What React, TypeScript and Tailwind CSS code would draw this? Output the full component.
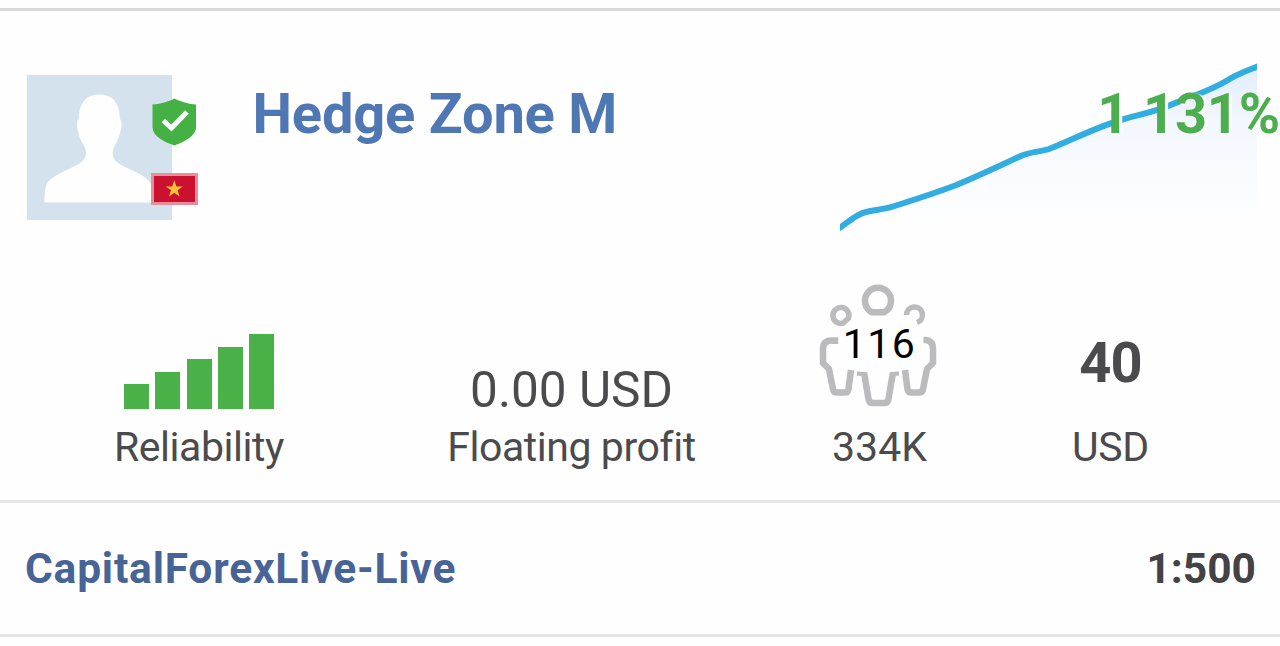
import type { ReactNode } from "react";

const BARS = ["h-[25px]", "h-[37px]", "h-[50px]", "h-[62px]", "h-[75px]"];

const Avatar = () => (
  <div className="relative mt-[64px] ml-[27px] h-[145px] w-[145px] shrink-0">
    <svg className="h-[145px] w-[145px]" viewBox="0 0 145 145">
      <rect width="145" height="145" fill="#d3e2ec" />
      <path
        d="M72 19.500C59 19.500 52 28 51.700 44C49.500 46 49.500 50 50.500 54C51.500 59 53 65 56.500 70C59 74 60 77 58.500 81C57 86 52 89 46 92C33 98 22 103 19.500 110C17.500 115 17.500 121 17.300 127.500H127C127 121 126.500 115 124.500 110C122 103 110 97 98 92C92 89 87 86 86 81C85 77 86 74 88 70C91.500 65 93 59 94 54C95 50 95 46 93 44C92.500 28 86 19.500 72 19.500Z"
        fill="#fefefe"
      />
    </svg>

    {/* Verified */}
    <svg className="absolute top-[23px] left-[125px] h-[48px] w-[45px]" viewBox="0 0 45 48">
      <path
        d="M22.500 0.500C27 3 36 6 44 6.500V29C44 38 32 44 22.500 47.500C12 44 0.500 38 0.500 29V6.500C9 6 18 3 22.500 0.500Z"
        fill="#45b145"
      />
      <path d="M11.300 22.500L19.500 30L35 14" fill="none" stroke="#fefefe" strokeWidth="5" />
    </svg>

    {/* Country */}
    <svg className="absolute top-[98px] left-[124px] h-[32px] w-[47px]" viewBox="0 0 47 32">
      <rect width="47" height="32" fill="#e88d9b" />
      <rect x="3" y="3" width="41" height="26" fill="#cc1030" />
      <path
        d="M23.300 7.200L25.400 13.400H31.800L26.600 17.300L28.600 23.600L23.300 19.800L18 23.600L20 17.300L14.800 13.400H21.200Z"
        fill="#fdc52f"
      />
    </svg>
  </div>
);

const GrowthChart = () => (
  <svg className="h-[175px] w-[417px]" viewBox="840 60 417 175">
    <defs>
      <linearGradient id="growth" x1="0" y1="0" x2="0" y2="1">
        <stop offset="0" stopColor="#e0eefb" />
        <stop offset="0.35" stopColor="#f3f7fe" />
        <stop offset="0.85" stopColor="#fcfdfe" />
        <stop offset="1" stopColor="#fefefe" />
      </linearGradient>
    </defs>
    <path
      d="M841 228C850 222 856 215 868 212C876 210 884 210 893 207C912 201 934 194 955 186C977 177 1000 166 1022 156C1031 152 1040 152 1049 149C1070 141 1096 127 1124 119C1142 114 1160 111 1173 105C1190 98 1210 92 1228 80C1239 73 1249 70 1259 66V228Z"
      fill="url(#growth)"
    />
    <path
      d="M838 229C850 221 856 214 868 211.500C876 209.500 884 209.500 893 206.500C912 200.500 934 193.500 955 185.500C977 176.500 1000 165.500 1022 155.500C1031 151.500 1040 152 1049 149C1070 141 1096 127 1124 119C1142 114 1158 111 1173 104C1190 97 1210 91 1228 80C1239 73 1249 70 1260 65.500"
      fill="none"
      stroke="#32addf"
      strokeWidth="6"
    />
  </svg>
);

const PeopleIcon = () => (
  <svg className="h-[124px] w-[122px]" viewBox="818 284 122 124" fill="none" stroke="#bbbabc" strokeWidth="6.5">
    <path d="M872 312.300A13 13 0 1 1 884 312.300Z" strokeLinejoin="round" />
    <path d="M843 323.200A8 8 0 1 1 848.500 318Z" strokeWidth="5.500" />
    <path d="M906.500 315A8 8 0 1 1 917 322.500" strokeWidth="5.500" />
    <path d="M835 344V340.500H831Q823 341 823 349V363L829 369L833 389Q833.500 392.500 837 392.500H845Q848 392.500 848.500 389L851 370" />
    <path d="M923.500 340H926Q933 341 933 349V363L927 369L923 389Q922.500 392.500 919 392.500H911Q908 392.500 907.500 389L905 370" />
    <path d="M857 372.500H864L868.500 399Q869 403 873 403H884Q888 403 888.500 399L893 372.500H899" />
    <path d="M848 362H908L899 371.500L878 373L857 371.500Z" fill="#fefefe" stroke="none" />
  </svg>
);

const Stat = ({ label, className, children }: { label: string; className: string; children: ReactNode }) => (
  <div className={`flex flex-col items-center justify-end whitespace-nowrap ${className}`}>
    {children}
    <div className="h-[48px] text-[41px] leading-[50px]">{label}</div>
  </div>
);

const App = () => {
  return (
    <div className="h-[646px] w-[1280px] overflow-hidden bg-[#fefefe] pt-[8px] font-['Roboto',sans-serif] text-[#4b4a4c]">
      <section className="flex h-[495px] flex-col border-t-[3px] border-b-[3px] border-t-[#d9d9d9] border-b-[#e6e5e7]">
        {/* Signal header */}
        <div className="flex h-[240px]">
          <Avatar />
          <h1 className="mt-[71px] ml-[80.500px] text-[56px] leading-[64px] font-bold tracking-[-0.2px] whitespace-nowrap text-[#4f77b3]">
            Hedge Zone M
          </h1>
          <div className="relative mt-[49px] mr-[23px] ml-auto">
            <GrowthChart />
            <div className="absolute top-[22px] right-[-23px] text-[56px] leading-[64px] font-bold tracking-[-0.2px] whitespace-nowrap text-[#4dae4f] [text-shadow:3px_1px_1px_#fefefe]">
              1 131%
            </div>
          </div>
        </div>

        {/* Stats */}
        <div className="flex h-[219px]">
          <Stat label="Reliability" className="w-[398px] tracking-[-0.45px]">
            <div className="mb-[13px] flex items-end gap-[6.25px]">
              {BARS.map(height => (
                <div key={height} className={`w-[25px] bg-[#49b148] ${height}`} />
              ))}
            </div>
          </Stat>
          <Stat label="Floating profit" className="w-[347px] tracking-[-0.45px]">
            <div className="mb-[4px] text-[49.5px] leading-[56px] tracking-normal">0.00 USD</div>
          </Stat>
          <Stat label="334K" className="w-[269px]">
            <div className="relative mr-[2px] mb-[14px]">
              <PeopleIcon />
              <div className="absolute top-[36px] left-px w-full text-center text-[41px] leading-[48px] tracking-[1.5px] text-black">
                116
              </div>
            </div>
          </Stat>
          <Stat label="USD" className="w-[193px] tracking-[-0.3px]">
            <div className="mb-[27px] text-[56px] leading-[64px] font-bold tracking-[-0.8px]">40</div>
          </Stat>
        </div>
      </section>

      {/* Broker */}
      <section className="flex h-[134px] items-center justify-between border-b-[3px] border-[#e6e5e7] pr-[24px] pl-[25px] text-[42.5px] font-bold">
        <span className="tracking-[0.8px] text-[#486496]">CapitalForexLive-Live</span>
        <span className="text-[#434244]">1:500</span>
      </section>
    </div>
  );
};

export default App;
